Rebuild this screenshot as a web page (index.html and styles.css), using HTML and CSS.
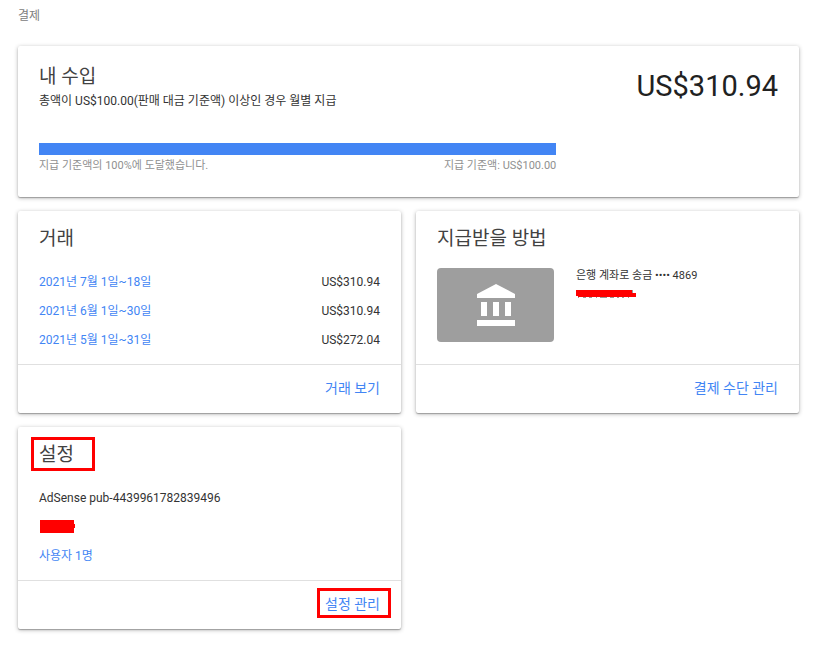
FILE: index.html
```html
<!DOCTYPE html>
<html lang="ko">
<head>
<meta charset="utf-8">
<meta name="viewport" content="width=device-width, initial-scale=1">
<title>결제</title>
<link rel="stylesheet" href="styles.css">
</head>
<body>
<main class="page">
  <h1 class="page-title">결제</h1>

  <div class="cards">
    <section class="card card-wide earnings">
      <div class="earnings-head">
        <div>
          <h2 class="card-title">내 수입</h2>
          <p class="earnings-note">총액이 US$100.00(판매 대금 기준액) 이상인 경우 월별 지급</p>
        </div>
        <p class="amount">US$310.94</p>
      </div>
      <div class="threshold">
        <progress class="bar" id="threshold" value="100" max="100"></progress>
        <div class="threshold-labels">
          <label for="threshold">지급 기준액의 100%에 도달했습니다.</label>
          <span>지급 기준액: US$100.00</span>
        </div>
      </div>
    </section>

    <section class="card">
      <div class="card-body">
        <h2 class="card-title">거래</h2>
        <table class="transactions">
          <tbody>
            <tr><td><a href="#">2021년 7월 1일~18일</a></td><td class="sum">US$310.94</td></tr>
            <tr><td><a href="#">2021년 6월 1일~30일</a></td><td class="sum">US$310.94</td></tr>
            <tr><td><a href="#">2021년 5월 1일~31일</a></td><td class="sum">US$272.04</td></tr>
          </tbody>
        </table>
      </div>
      <div class="card-footer"><a href="#">거래 보기</a></div>
    </section>

    <section class="card">
      <div class="card-body">
        <h2 class="card-title">지급받을 방법</h2>
        <div class="method">
          <div class="method-tile">
            <svg width="38" height="42" viewBox="2 1 19 21" fill="#fff" aria-hidden="true"><path d="M4 10v7h3v-7H4zm6 0v7h3v-7h-3zM2 22h19v-3H2v3zm14-12v7h3v-7h-3zm-4.5-9L2 6v2h19V6l-9.5-5z"/></svg>
          </div>
          <div class="method-text">
            <p>은행 계좌로 송금 •••• 4869</p>
            <svg class="redaction" width="60" height="8" viewBox="0 0 60 8" aria-hidden="true"><path fill="#999" d="M2 6h1v2H2zM7 6h3v2H7zM13 6h3v2h-3zM20 6h1v2h-1zM24 6h7v2h-7zM34 6h4v2h-4zM41 6h2v2h-2zM46 6h2v2h-2zM52 6h1v2h-1zM56 0h1v3h-1z"/><path fill="#f00" d="M0 0h56v3h4v4H2V6H0z"/></svg>
          </div>
        </div>
      </div>
      <div class="card-footer"><a href="#">결제 수단 관리</a></div>
    </section>

    <section class="card">
      <div class="card-body">
        <h2 class="card-title"><span class="marked marked-title">설정</span></h2>
        <ul class="settings">
          <li>AdSense pub-4439961782839496</li>
          <li><svg class="redaction" width="36" height="13" viewBox="0 0 36 13" aria-hidden="true"><path fill="#f00" d="M1 0h34v4h1v4h-1v5H1z"/></svg></li>
          <li><a href="#">사용자 1명</a></li>
        </ul>
      </div>
      <div class="card-footer"><a class="marked marked-link" href="#">설정 관리</a></div>
    </section>
  </div>
</main>
</body>
</html>
```
FILE: styles.css
```css
* {
  box-sizing: border-box;
}

body {
  margin: 0;
  background: #fff;
  color: #333;
  font: 12px/24px Roboto, "Noto Sans CJK KR", sans-serif;
}

h1, h2, p, ul {
  margin: 0;
  padding: 0;
  font-weight: 400;
}

a {
  color: #4285f4;
  text-decoration: none;
}

.page {
  padding: 4px 15px 20px 18px;
}

.page-title {
  margin-bottom: 18px;
  color: #808080;
  font-size: 12px;
}

.cards {
  display: grid;
  grid-template-columns: 1fr 1fr;
  gap: 14px 15px;
}

.card {
  display: flex;
  flex-direction: column;
  border-radius: 2px;
  background: #fff;
  box-shadow: 0 1px 4px rgba(0, 0, 0, 0.3), 0 1px 1px rgba(0, 0, 0, 0.25);
}

.card-wide {
  grid-column: 1 / -1;
}

.card-title {
  color: #424242;
  font-size: 19px;
  line-height: 24px;
}

.card-body {
  flex: 1;
  padding: 16px 21px 10px;
}

.card-footer {
  display: flex;
  justify-content: flex-end;
  padding: 11px 21px 13px;
  border-top: 1px solid #e0e0e0;
  font-size: 14px;
}

.earnings {
  padding: 19px 21px 20px;
}

.earnings-head {
  display: flex;
  justify-content: space-between;
  margin-bottom: 30px;
}

.amount {
  color: #212121;
  font-size: 29px;
  line-height: 42px;
}

.threshold {
  width: 70%;
}

.bar {
  display: block;
  width: 100%;
  height: 12px;
  border: 0;
  background: #e0e0e0;
  appearance: none;
}

.bar::-webkit-progress-bar {
  background: #e0e0e0;
}

.bar::-webkit-progress-value {
  background: #4285f4;
}

.threshold-labels {
  display: flex;
  justify-content: space-between;
  color: #909090;
  font-size: 11px;
  line-height: 22px;
}

.transactions {
  width: 100%;
  margin-top: 16px;
  border-collapse: collapse;
}

.transactions td {
  height: 29px;
  padding: 0;
}

.transactions .sum {
  text-align: right;
}

.method {
  display: flex;
  gap: 22px;
  margin-top: 17px;
}

.method-tile {
  display: flex;
  align-items: center;
  justify-content: center;
  width: 117px;
  height: 74px;
  border-radius: 4px;
  background: #9e9e9e;
}

.method-text {
  font-size: 11px;
  line-height: 16px;
}

.redaction {
  display: block;
}

.method-text .redaction {
  margin-top: 6px;
}

.settings {
  margin-top: 16px;
  list-style: none;
}

.settings li {
  display: flex;
  align-items: center;
  height: 29px;
}

/* Red frames drawn over the card, around the marked text */
.marked {
  position: relative;
}

.marked::after {
  position: absolute;
  border: 3px solid #f00;
  content: "";
}

.marked-title::after {
  inset: -6px -21px -5px -8px;
}

.marked-link::after {
  inset: -4px -11px -2px -8px;
}
```
